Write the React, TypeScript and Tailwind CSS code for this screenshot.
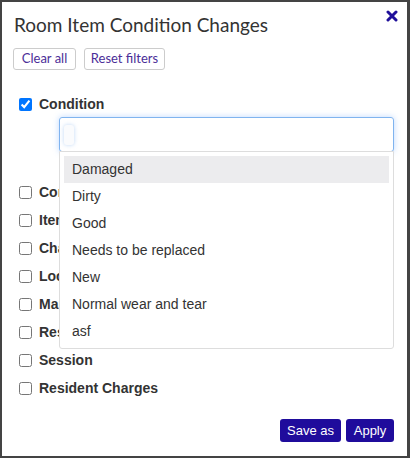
import { useState } from 'react';

const OPTIONS = ['Damaged', 'Dirty', 'Good', 'Needs to be replaced', 'New', 'Normal wear and tear', 'asf'];

const FILTERS = ['Comments', 'Item', 'Changed By', 'Location', 'Manufacturer', 'Resident', 'Session', 'Resident Charges'];

const FilterRow = ({ label, checked }: { label: string; checked?: boolean }) => (
  <label className="flex items-center h-[28px] gap-[7px]">
    <input type="checkbox" defaultChecked={checked} className="w-[13px] h-[13px] m-0 accent-[#0075ff]" />
    <span className="text-[14px] font-bold text-[#333]">{label}</span>
  </label>
);

export default function App() {
  const [active] = useState(0);

  return (
    <div className="w-[410px] h-[458px] bg-white border-2 border-r-[3px] border-[#444] flex flex-col font-['Liberation_Sans',Arial,sans-serif] relative">
      {/* Header */}
      <div className="flex justify-between items-start pl-[12px] pr-[8px] pt-[11px]">
        <h2 className="font-['Lato',sans-serif] text-[19px] leading-[24px] text-[#333]">Room Item Condition Changes</h2>
        <button className="mt-[-3px] mr-[1px]">
          <svg width="12" height="12" viewBox="0 0 12 12">
            <path d="M2 2 L10 10 M10 2 L2 10" stroke="#20109a" strokeWidth="3" strokeLinecap="round" />
          </svg>
        </button>
      </div>

      <div className="flex gap-[8px] pl-[11px] mt-[11px] font-['Lato',sans-serif]">
        <button className="h-[22px] w-[63px] border border-[#ccc] rounded-[3px] text-[13px] text-[#4b2e98]">Clear all</button>
        <button className="h-[22px] w-[81px] border border-[#ccc] rounded-[3px] text-[13px] text-[#4b2e98]">Reset filters</button>
      </div>

      {/* Filters */}
      <div className="flex flex-col pl-[17px] mt-[20px]">
        <FilterRow label="Condition" checked />
        <div className="relative ml-[40px] mr-[13px] mt-[-1px] mb-[26px]">
          <div className="h-[35px] border border-[#80b4ef] rounded-[3px] shadow-[0_0_6px_rgba(110,170,255,0.45)] flex items-center pl-[4px]">
            <div className="w-[10px] h-[20px] rounded-[3px] bg-[#fafbfd] shadow-[0_0_4px_rgba(150,190,240,0.6)]" />
          </div>
          <ul className="absolute left-0 right-0 top-[34px] bg-white border border-[#ddd] rounded-b-[3px] px-[4px] pt-[4px] pb-[3px] z-10">
            {OPTIONS.map((o, i) => (
              <li key={o} className={`h-[27px] flex items-center pl-[8px] text-[14px] text-[#333] ${i === active ? 'bg-[#ececee]' : ''}`}>
                {o}
              </li>
            ))}
          </ul>
        </div>
        {FILTERS.map((f) => (
          <FilterRow key={f} label={f} />
        ))}
      </div>

      {/* Footer */}
      <div className="mt-auto flex justify-end gap-[5px] pr-[13px] pb-[14px]">
        <button className="h-[23px] w-[61px] rounded-[3px] bg-[#1f0c9c] text-white text-[13px]">Save as</button>
        <button className="h-[23px] w-[48px] rounded-[3px] bg-[#1f0c9c] text-white text-[13px]">Apply</button>
      </div>
    </div>
  );
}
